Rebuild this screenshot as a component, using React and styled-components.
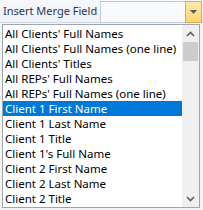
import styled, { createGlobalStyle } from "styled-components";

const Global = createGlobalStyle`
  html, body {
    margin: 0;
    padding: 0;
    background: #f3f4f6;
    font-family: "Noto Sans", "Open Sans", sans-serif;
  }
`

const Page = styled.div`
  width: 203px;
  height: 210px;
  overflow: hidden;
`
const Toolbar = styled.div`
  height: 23px;
  display: flex;
  align-items: center;
  background: linear-gradient(#f7f8fa, #eef1f5);
  border-bottom: 1px solid #d5dbe3;
  box-sizing: border-box;
  padding-left: 3px;
`
const Label = styled.span`
  font-size: 11px;
  line-height: 14px;
  color: #1e395b;
  flex-shrink: 0;
  width: 97px;
  white-space: nowrap;
`
const Combo = styled.div`
  display: flex;
  height: 22px;
  align-self: flex-start;
  margin-top: 1px;
`
const Input = styled.div`
  width: 84px;
  background: #f8fafd;
  border: 1px solid #c3cbd6;
  border-right: none;
`
const DropButton = styled.div`
  width: 15px;
  background: linear-gradient(#fdeaa7, #fbd774);
  border: 1px solid #e3a94c;
  display: flex;
  align-items: center;
  justify-content: center;
`
const List = styled.div`
  margin: 1px 0 0 2px;
  width: 198px;
  height: 184px;
  box-sizing: border-box;
  border: 1px solid #9ea6b1;
  background: #fff;
  display: flex;
`
const Items = styled.div`
  flex: 1;
  padding-top: 1px;
`
const Item = styled.div`
  height: 15px;
  line-height: 15px;
  font-size: 11.5px;
  padding-left: 2px;
  color: ${p => (p.$active ? "#fff" : "#000")};
  background: ${p => (p.$active ? "#0078d7" : "transparent")};
  white-space: nowrap;
  overflow: hidden;
`
const Scrollbar = styled.div`
  width: 17px;
  background: #f0f0f0;
  display: flex;
  flex-direction: column;
`
const Arrow = styled.div`
  height: 17px;
  display: flex;
  align-items: center;
  justify-content: center;
`
const Track = styled.div`
  flex: 1;
  padding: 0 1px;
`
const Thumb = styled.div`
  height: 19px;
  background: #cdcdcd;
`

const items = [
  "All Clients' Full Names",
  "All Clients' Full Names (one line)",
  "All Clients' Titles",
  "All REPs' Full Names",
  "All REPs' Full Names (one line)",
  "Client 1 First Name",
  "Client 1 Last Name",
  "Client 1 Title",
  "Client 1's Full Name",
  "Client 2 First Name",
  "Client 2 Last Name",
  "Client 2 Title",
]

const Chevron = ({ up }) => (
  <svg width="9" height="6" viewBox="0 0 9 6">
    <path
      d={up ? "M1 5 L4.5 1.5 L8 5" : "M1 1 L4.5 4.5 L8 1"}
      fill="none"
      stroke="#606060"
      strokeWidth="1.6"
    />
  </svg>
)

const App = () => {
  return (
    <Page>
      <Global />
      <Toolbar>
        <Label>Insert Merge Field</Label>
        <Combo>
          <Input />
          <DropButton>
            <svg width="7" height="4" viewBox="0 0 7 4">
              <path d="M0 0 H7 L3.5 4 Z" fill="#5a5a5a" />
            </svg>
          </DropButton>
        </Combo>
      </Toolbar>
      <List>
        <Items>
          {items.map((t, i) => (
            <Item key={t} $active={i === 5}>{t}</Item>
          ))}
        </Items>
        <Scrollbar>
          <Arrow><Chevron up /></Arrow>
          <Track><Thumb /></Track>
          <Arrow><Chevron /></Arrow>
        </Scrollbar>
      </List>
    </Page>
  );
};

export default App;
